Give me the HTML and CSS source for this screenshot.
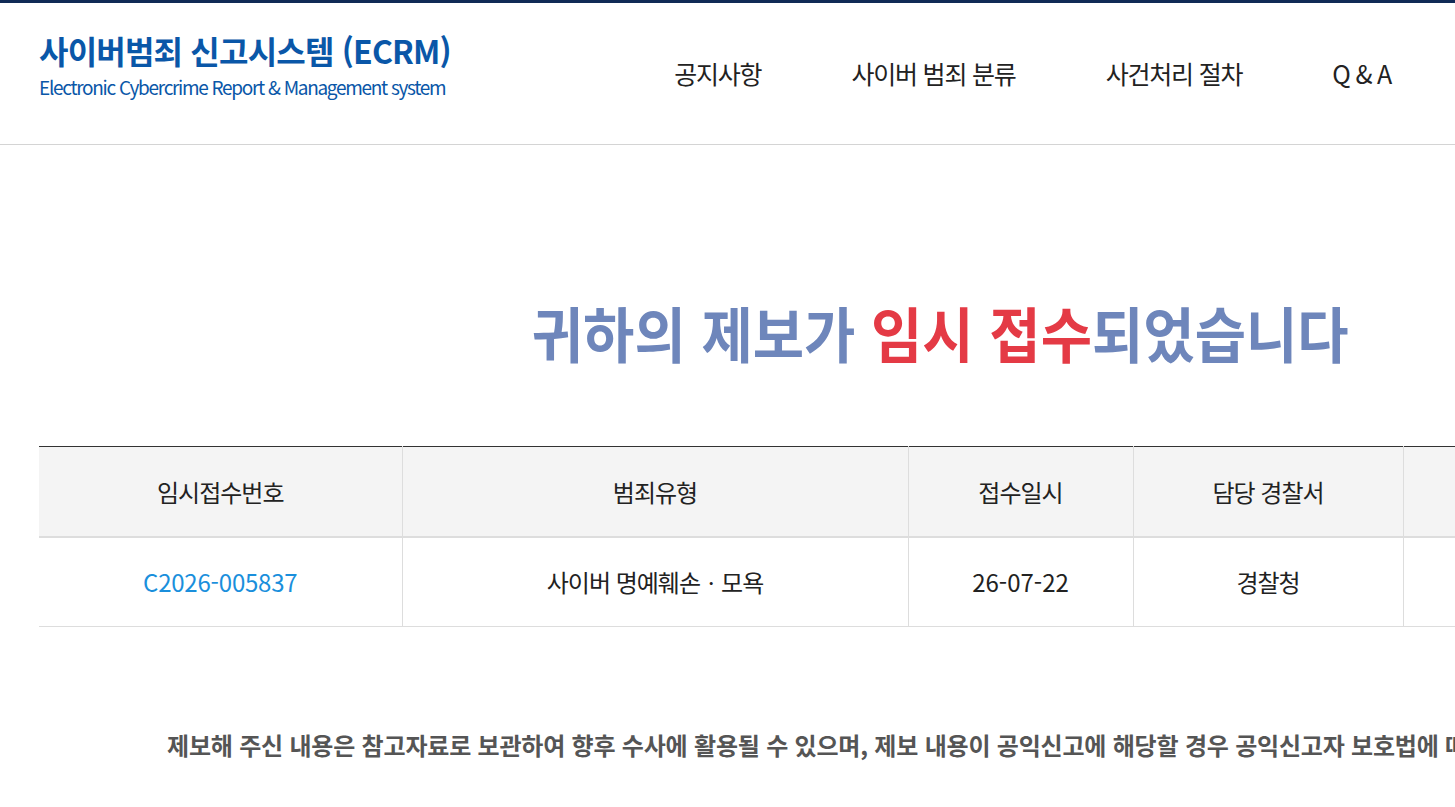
FILE: index.html
```html
<!DOCTYPE html>
<html lang="ko">
<head>
  <meta charset="UTF-8">
  <meta name="viewport" content="width=device-width, initial-scale=1.0">
  <title>사이버범죄 신고시스템 (ECRM) - 제보 임시 접수</title>
  <link rel="stylesheet" href="styles.css">
</head>
<body>
  <header class="site-header">
    <div class="header-inner">
      <a class="logo" href="#">
        <span class="logo-title">사이버범죄 신고시스템 (ECRM)</span>
        <span class="logo-sub">Electronic Cybercrime Report &amp; Management system</span>
      </a>
      <nav class="gnb">
        <a href="#">공지사항</a>
        <a href="#">사이버 범죄 분류</a>
        <a href="#">사건처리 절차</a>
        <a href="#">Q &amp; A</a>
      </nav>
    </div>
  </header>

  <main class="content">
    <h1 class="result-title">
      <span>귀하의 제보가 <em>임시 접수</em>되었습니다</span>
    </h1>

    <table class="result-table">
      <colgroup>
        <col class="col-no">
        <col class="col-type">
        <col class="col-date">
        <col class="col-police">
        <col>
      </colgroup>
      <thead>
        <tr>
          <th>임시접수번호</th>
          <th>범죄유형</th>
          <th>접수일시</th>
          <th>담당 경찰서</th>
          <th>처리상태</th>
        </tr>
      </thead>
      <tbody>
        <tr>
          <td class="receipt-no">C2026-005837</td>
          <td>사이버 명예훼손ㆍ모욕</td>
          <td class="num">26-07-22</td>
          <td>경찰청</td>
          <td>임시접수</td>
        </tr>
      </tbody>
    </table>

    <p class="notice">제보해 주신 내용은 참고자료로 보관하여 향후 수사에 활용될 수 있으며, 제보 내용이 공익신고에 해당할 경우 공익신고자 보호법에 따라 보호받을 수 있습니다.</p>
  </main>
</body>
</html>
```

FILE: styles.css
```css
:root {
  --navy: #102a56;
  --brand: #0a57a8;
  --title-blue: #6e86bb;
  --accent-red: #e43a45;
  --link-blue: #1a8fdc;
  --text: #222222;
  --line: #dddddd;
}

* {
  margin: 0;
  padding: 0;
  box-sizing: border-box;
}

body {
  font-family: "Noto Sans CJK KR", "Noto Sans", sans-serif;
  color: var(--text);
  background: #fff;
}

a {
  color: inherit;
  text-decoration: none;
}

/* header */
.site-header {
  border-top: 3px solid var(--navy);
  border-bottom: 1px solid #d4d4d4;
}

.header-inner {
  height: 141px;
  display: flex;
  align-items: center;
  justify-content: space-between;
  padding: 0 19px 0 39px;
}

.logo {
  display: flex;
  flex-direction: column;
  color: var(--brand);
  margin-top: -19px;
}

.logo-title {
  font-size: 32px;
  font-weight: 700;
  letter-spacing: -0.8px;
  line-height: 40px;
}

.logo-sub {
  font-size: 19px;
  letter-spacing: -1.3px;
  line-height: 24px;
  margin-top: 5px;
}

.gnb {
  display: flex;
  margin-top: -1px;
}

.gnb a {
  font-size: 25px;
  letter-spacing: -1.2px;
  padding: 0 45px;
  color: #222;
}

/* result */
.content {
  width: 1802px;
  margin-left: 39px;
}

.result-title {
  margin-top: 147px;
  text-align: center;
  font-size: 60px;
  font-weight: 700;
  line-height: 80px;
  color: var(--title-blue);
}

.result-title span {
  display: inline-block;
  transform: scaleX(0.93);
}

.result-title em {
  font-style: normal;
  color: var(--accent-red);
}

.result-table {
  width: 100%;
  margin-top: 74px;
  border-collapse: collapse;
  table-layout: fixed;
  border-top: 1px solid #333;
}

.col-no { width: 363px; }
.col-type { width: 506px; }
.col-date { width: 225px; }
.col-police { width: 270px; }

.result-table th,
.result-table td {
  font-size: 24px;
  font-weight: 400;
  letter-spacing: -1px;
  text-align: center;
  border-left: 1px solid var(--line);
}

.result-table th:first-child,
.result-table td:first-child {
  border-left: none;
}

.result-table th {
  height: 90px;
  background: #f4f4f4;
  border-bottom: 2px solid var(--line);
}

.result-table td {
  height: 90px;
  border-bottom: 1px solid var(--line);
}

.result-table .receipt-no {
  color: var(--link-blue);
  letter-spacing: -0.2px;
}

.result-table .num {
  letter-spacing: 0;
}

.notice {
  margin-top: 100px;
  text-align: center;
  white-space: nowrap;
  font-size: 24px;
  font-weight: 700;
  letter-spacing: -0.2px;
  color: #555;
}
```
